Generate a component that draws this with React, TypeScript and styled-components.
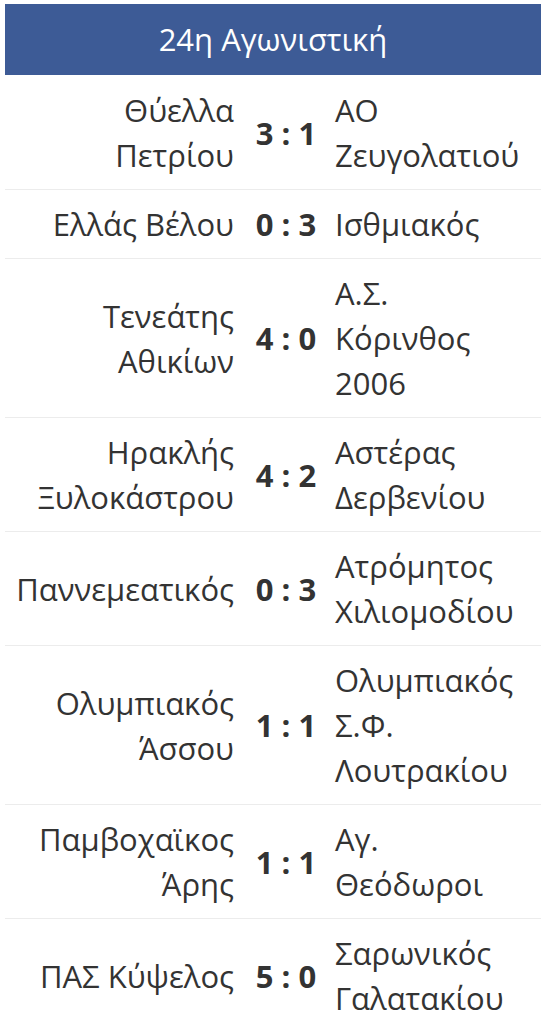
import styled, { createGlobalStyle } from "styled-components";

const GlobalStyle = createGlobalStyle`
    body {
        margin: 0;
        background: #ffffff;
        font-family: "Open Sans", "Noto Sans", sans-serif;
        color: #333333;
    }
`;

const Wrapper = styled.div({
    padding: '4px 2px 0 5px',
});

const Header = styled.div({
    height: 71,
    marginBottom: 1,
    background: '#3d5b96',
    color: '#ffffff',
    fontSize: 31,
    lineHeight: '70px',
    textAlign: 'center',
});

const MatchRow = styled.div({
    display: 'grid',
    gridTemplateColumns: '237px 88px 1fr',
    alignItems: 'center',
    padding: '12px 0 11px',
    borderBottom: '1px solid #ececec',
    fontSize: 31,
    lineHeight: '45px',
});

const Team = styled.div<{ $side: 'home' | 'away' }>(({ $side }) => ({
    textAlign: $side === 'home' ? 'right' : 'left',
    paddingRight: $side === 'home' ? 8 : 0,
    paddingLeft: $side === 'away' ? 5 : 0,
    whiteSpace: 'nowrap',
}));

const Score = styled.div({
    fontWeight: 700,
    textAlign: 'center',
    whiteSpace: 'nowrap',
});

type Match = {
    home: string[];
    away: string[];
    score: string;
};

const matches: Match[] = [
    { home: ['Θύελλα', 'Πετρίου'], away: ['ΑΟ', 'Ζευγολατιού'], score: '3 : 1' },
    { home: ['Ελλάς Βέλου'], away: ['Ισθμιακός'], score: '0 : 3' },
    { home: ['Τενεάτης', 'Αθικίων'], away: ['Α.Σ.', 'Κόρινθος', '2006'], score: '4 : 0' },
    { home: ['Ηρακλής', 'Ξυλοκάστρου'], away: ['Αστέρας', 'Δερβενίου'], score: '4 : 2' },
    { home: ['Παννεμεατικός'], away: ['Ατρόμητος', 'Χιλιομοδίου'], score: '0 : 3' },
    { home: ['Ολυμπιακός', 'Άσσου'], away: ['Ολυμπιακός', 'Σ.Φ.', 'Λουτρακίου'], score: '1 : 1' },
    { home: ['Παμβοχαϊκος', 'Άρης'], away: ['Αγ.', 'Θεόδωροι'], score: '1 : 1' },
    { home: ['ΠΑΣ Κύψελος'], away: ['Σαρωνικός', 'Γαλατακίου'], score: '5 : 0' },
];

const Lines = ({ lines }: { lines: string[] }) => <>
    {lines.map((l, i) => <div key={i}>{l}</div>)}
</>;

const App = () => {
    return <>
        <GlobalStyle />
        <Wrapper>
            <Header>24η Αγωνιστική</Header>
            {matches.map((m, i) => (
                <MatchRow key={i}>
                    <Team $side="home"><Lines lines={m.home} /></Team>
                    <Score>{m.score}</Score>
                    <Team $side="away"><Lines lines={m.away} /></Team>
                </MatchRow>
            ))}
        </Wrapper>
    </>
};

export default App;
